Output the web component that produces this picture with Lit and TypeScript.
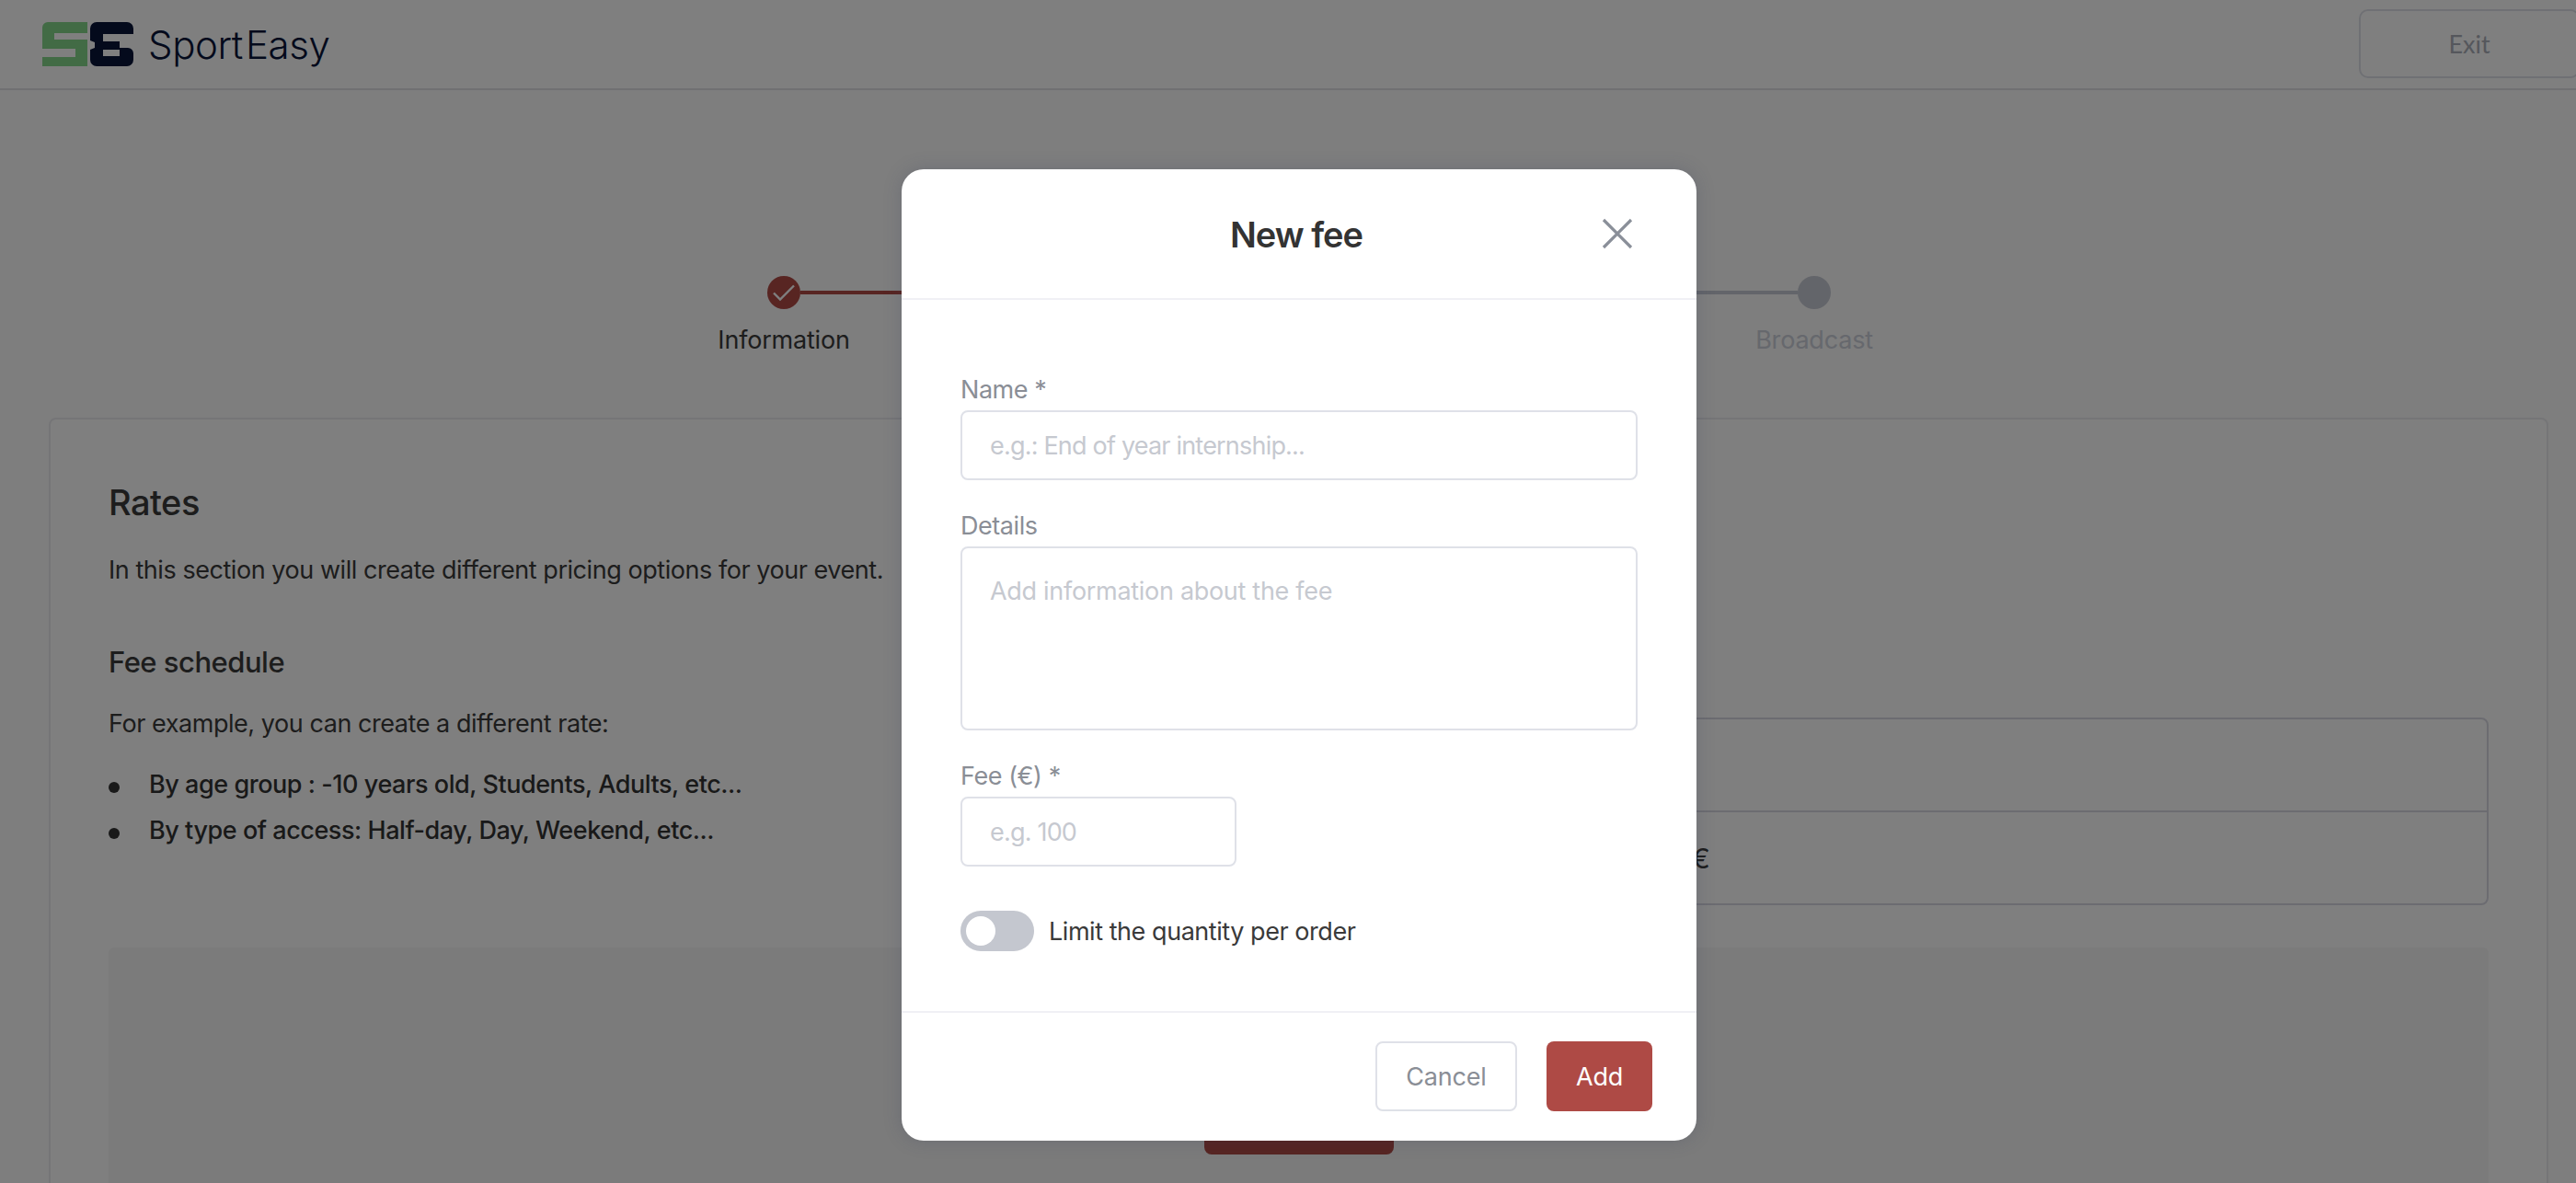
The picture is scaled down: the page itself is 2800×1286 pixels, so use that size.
import { LitElement, html, css, svg } from "lit";
import { customElement } from "lit/decorators.js";

const logoMark = svg`
  <path fill="#84d68a" d="M6 0H49V12H13V19H49V48H0V38H36V29H0V6A6 6 0 0 1 6 0Z" />
  <path fill="#081438" fill-rule="evenodd" d="M59 0H92A7 7 0 0 1 99 7V13H66V21H84V28H93A6 6 0 0 1 99 34V41A7 7 0 0 1 92 48H59A7 7 0 0 1 52 41V30L57 28V22L52 20V7A7 7 0 0 1 59 0ZM66 30H84V37H66Z" />
`;

@customElement("app-root")
export class AppRoot extends LitElement {
  static styles = css`
    :host {
      display: block;
      width: 2800px;
      height: 1286px;
      overflow: hidden;
      position: relative;
      font-family: Inter, "Liberation Sans", sans-serif;
      font-size: 27px;
      letter-spacing: -0.45px;
      color: #3a3a3a;
      background: #fcfcfc;
    }

    .page {
      width: 2824px;
    }

    header {
      height: 96px;
      border-bottom: 2px solid #e0e0e4;
      box-sizing: content-box;
      display: flex;
      align-items: center;
      justify-content: space-between;
      padding: 0 20px 0 46px;
      background: #fff;
    }

    .brand {
      display: flex;
      align-items: center;
      gap: 16px;
    }

    .brand svg {
      width: 99px;
      height: 48px;
    }

    .wordmark {
      display: flex;
      gap: 3px;
      font-size: 42px;
      font-weight: 300;
      letter-spacing: -0.4px;
      color: #081438;
    }

    .exit {
      width: 240px;
      height: 75px;
      box-sizing: border-box;
      border: 2px solid #dfe1e8;
      border-radius: 10px;
      background: transparent;
      color: #aaaeb8;
      font-family: Lato, sans-serif;
      font-size: 27px;
      margin-top: -1px;
    }

    .stepper {
      width: 1156px;
      margin: 0 auto;
      padding-top: 202px;
    }

    .track {
      display: flex;
      align-items: center;
    }

    .dot {
      width: 36px;
      height: 36px;
      border-radius: 50%;
      flex: none;
    }

    .dot svg {
      display: block;
      width: 36px;
      height: 36px;
    }

    .line {
      flex: 1;
      height: 4px;
    }

    .done {
      background: #b04a45;
    }

    .todo {
      background: #c6cad4;
    }

    .labels {
      display: flex;
      justify-content: space-between;
      margin: 14px -102px 0;
      line-height: 40px;
      letter-spacing: -0.2px;
    }

    .labels span {
      width: 240px;
      text-align: center;
    }

    .labels .muted {
      color: #ccd0da;
    }

    .card {
      margin: 64px 54px 0 53px;
      padding: 68px 63px 0;
      border: 2px solid #eaeaee;
      border-radius: 8px;
      background: #fff;
      height: 900px;
    }

    h1 {
      margin: 0 0 32px;
      font-size: 38px;
      line-height: 44px;
      font-weight: 500;
      letter-spacing: -0.5px;
    }

    p {
      margin: 0;
      line-height: 40px;
    }

    .columns {
      display: grid;
      grid-template-columns: 1fr 1265px;
      gap: 60px;
      margin-top: 60px;
    }

    h2 {
      margin: 0 0 27px;
      font-size: 31px;
      line-height: 40px;
      font-weight: 500;
      letter-spacing: -0.5px;
    }

    ul {
      margin: 26px 0 0;
      padding: 0;
      list-style: none;
      display: flex;
      flex-direction: column;
      gap: 10px;
    }

    li {
      display: flex;
      align-items: center;
      gap: 32px;
      line-height: 40px;
      font-weight: 500;
      color: #333;
    }

    li::before {
      content: "";
      width: 12px;
      height: 12px;
      border-radius: 50%;
      background: #333;
      margin-top: 6px;
    }

    .fees {
      margin-top: 80px;
      height: max-content;
      border: 2px solid #d8d9e2;
      border-radius: 8px;
    }

    .fee-row {
      height: 99px;
      display: grid;
      grid-template-columns: 308px 1fr;
      align-items: center;
      padding-left: 32px;
    }

    .fee-row + .fee-row {
      border-top: 2px solid #d8d9e2;
    }

    .fee-row span:last-child {
      font-size: 30px;
    }

    .empty {
      margin-top: 46px;
      height: 400px;
      background: #f6f6f6;
      border-radius: 6px;
      display: flex;
      justify-content: center;
      padding-top: 149px;
    }

    .add-fee {
      width: 206px;
      height: 76px;
      border: none;
      border-radius: 8px;
      background: #ae4a45;
      color: #fff;
      font: inherit;
    }

    .overlay {
      position: absolute;
      top: 0;
      left: 0;
      width: 2824px;
      height: 1286px;
      background: rgba(0, 0, 0, 0.5);
      display: flex;
      justify-content: center;
      align-items: flex-start;
      padding-top: 184px;
      box-sizing: border-box;
    }

    .modal {
      width: 864px;
      height: 1056px;
      background: #fff;
      border-radius: 24px;
      box-shadow: 0 0 20px rgba(50, 60, 90, 0.22);
      display: flex;
      flex-direction: column;
    }

    .modal-head {
      height: 142px;
      flex: none;
      box-sizing: border-box;
      border-bottom: 2px solid #f0f0f5;
      display: flex;
      align-items: center;
      justify-content: center;
      position: relative;
    }

    .modal-head h3 {
      margin: 2px 6px 0 0;
      font-size: 38px;
      font-weight: 600;
      letter-spacing: -1px;
      color: #333;
    }

    .close {
      position: absolute;
      top: 53px;
      right: 69px;
      width: 34px;
      height: 34px;
      padding: 0;
      border: none;
      background: none;
    }

    .close svg {
      display: block;
      width: 34px;
      height: 34px;
    }

    .modal-body {
      flex: 1;
      padding: 78px 64px 0;
      display: flex;
      flex-direction: column;
    }

    label {
      display: block;
      line-height: 40px;
      color: #8a8e96;
      margin-bottom: 2px;
    }

    input,
    textarea {
      display: block;
      box-sizing: border-box;
      width: 736px;
      height: 76px;
      padding: 0 30px;
      border: 2px solid #dfe1e8;
      border-radius: 8px;
      background: #fff;
      font: inherit;
      letter-spacing: -0.8px;
      color: #333;
      outline: none;
    }

    textarea {
      height: 200px;
      padding-top: 30px;
      letter-spacing: -0.3px;
      resize: none;
    }

    input::placeholder,
    textarea::placeholder {
      color: #c6c9d0;
      opacity: 1;
    }

    .field {
      margin-bottom: 30px;
    }

    .fee-input {
      width: 300px;
    }

    .limit {
      display: flex;
      align-items: center;
      gap: 16px;
      margin-top: 18px;
    }

    .toggle {
      width: 80px;
      height: 44px;
      border-radius: 22px;
      background: #c4c7cf;
      display: flex;
      align-items: center;
      padding-left: 6px;
      box-sizing: border-box;
    }

    .toggle::before {
      content: "";
      width: 32px;
      height: 32px;
      border-radius: 50%;
      background: #fff;
    }

    .modal-foot {
      height: 141px;
      flex: none;
      box-sizing: border-box;
      border-top: 2px solid #f0f0f5;
      display: flex;
      justify-content: flex-end;
      gap: 32px;
      padding: 31px 48px 0 0;
    }

    .modal-foot button {
      height: 76px;
      border-radius: 8px;
      font: inherit;
      letter-spacing: -0.2px;
    }

    .cancel {
      width: 154px;
      border: 2px solid #dfe1e8;
      background: #fff;
      color: #8a8e96;
    }

    .add {
      width: 115px;
      border: none;
      background: #ae4a45;
      color: #fff;
    }
  `;

  render() {
    return html`
      <div class="page">
        <header>
          <div class="brand">
            <svg viewBox="0 0 99 48">${logoMark}</svg>
            <span class="wordmark"><span>Sport</span><span>Easy</span></span>
          </div>
          <button class="exit">Exit</button>
        </header>

        <div class="stepper">
          <div class="track">
            <div class="dot done">
              <svg viewBox="0 0 36 36" fill="none" stroke="#fff" stroke-width="2.4">
                <path d="M7 18.5 14 25.5 29 10.5" />
              </svg>
            </div>
            <div class="line done"></div>
            <div class="dot done"></div>
            <div class="line todo"></div>
            <div class="dot todo"></div>
          </div>
          <div class="labels">
            <span>Information</span>
            <span>Rates</span>
            <span class="muted">Broadcast</span>
          </div>
        </div>

        <section class="card">
          <h1>Rates</h1>
          <p>In this section you will create different pricing options for your event.</p>
          <div class="columns">
            <div>
              <h2>Fee schedule</h2>
              <p>For example, you can create a different rate:</p>
              <ul>
                <li>By age group : -10 years old, Students, Adults, etc...</li>
                <li>By type of access: Half-day, Day, Weekend, etc...</li>
              </ul>
            </div>
            <div class="fees">
              <div class="fee-row"><span>Name</span><span>Fee</span></div>
              <div class="fee-row"><span>Adults</span><span>100 €</span></div>
            </div>
          </div>
          <div class="empty">
            <button class="add-fee">Add a fee</button>
          </div>
        </section>
      </div>

      <div class="overlay">
        <div class="modal">
          <div class="modal-head">
            <h3>New fee</h3>
            <button class="close" aria-label="Close">
              <svg viewBox="0 0 34 34" fill="none" stroke="#8a8f99" stroke-width="3.2">
                <path d="M2 2 32 32M32 2 2 32" />
              </svg>
            </button>
          </div>
          <div class="modal-body">
            <div class="field">
              <label>Name *</label>
              <input placeholder="e.g.: End of year internship..." />
            </div>
            <div class="field">
              <label>Details</label>
              <textarea placeholder="Add information about the fee"></textarea>
            </div>
            <div class="field">
              <label>Fee (€) *</label>
              <input class="fee-input" placeholder="e.g. 100" />
            </div>
            <div class="limit">
              <div class="toggle"></div>
              <span>Limit the quantity per order</span>
            </div>
          </div>
          <div class="modal-foot">
            <button class="cancel">Cancel</button>
            <button class="add">Add</button>
          </div>
        </div>
      </div>
    `;
  }
}
